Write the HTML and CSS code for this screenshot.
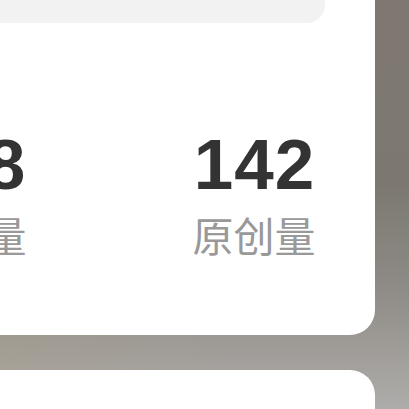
FILE: index.html
```html
<!DOCTYPE html>
<html lang="zh-CN">
<head>
<meta charset="utf-8">
<link rel="stylesheet" href="styles.css">
</head>
<body>
<div class="page">
  <section class="card">
    <div class="search-box"></div>
    <div class="stats">
      <div class="stat">
        <div class="stat-num">358</div>
        <div class="stat-label">访问量</div>
      </div>
      <div class="stat">
        <div class="stat-num">142</div>
        <div class="stat-label">原创量</div>
      </div>
    </div>
  </section>
  <section class="card card-next"></section>
</div>
</body>
</html>
```
FILE: styles.css
```css
html, body {
  margin: 0;
  padding: 0;
}
body {
  width: 409px;
  height: 409px;
  overflow: hidden;
  background:
    linear-gradient(to right, rgba(175, 160, 135, 0.25) 0%, rgba(175, 160, 135, 0) 55%),
    linear-gradient(to bottom, #7f7870 0%, #7c7871 45%, #8e8b86 70%, #a09d99 86%, #aeacaa 100%);
}
.page {
  display: flex;
  flex-direction: column;
  margin-left: -240px;
  width: 615px;
}
.card {
  background: #ffffff;
  border-radius: 0 0 25px 0;
  margin-top: -80px;
  padding: 20px 50px 80px 0;
}
.search-box {
  height: 83px;
  background: #f2f2f2;
  border-radius: 0 0 18px 0;
}
.stats {
  display: flex;
  justify-content: flex-end;
  gap: 129px;
  margin-top: 106px;
  margin-right: -9px;
}
.stat {
  width: 160px;
  display: flex;
  flex-direction: column;
  align-items: center;
}
.stat-num {
  font-family: "Liberation Sans", Arial, sans-serif;
  font-weight: 700;
  font-size: 71px;
  line-height: 71px;
  letter-spacing: 1px;
  margin-right: -1px;
  color: #333333;
}
.stat-label {
  font-family: "Noto Sans CJK SC", "Noto Sans", sans-serif;
  font-size: 41px;
  line-height: 41px;
  margin-top: 14px;
  color: #999999;
}
.card-next {
  margin-top: 35px;
  height: 120px;
  padding: 0;
  border-radius: 0 25px 0 0;
}
```
